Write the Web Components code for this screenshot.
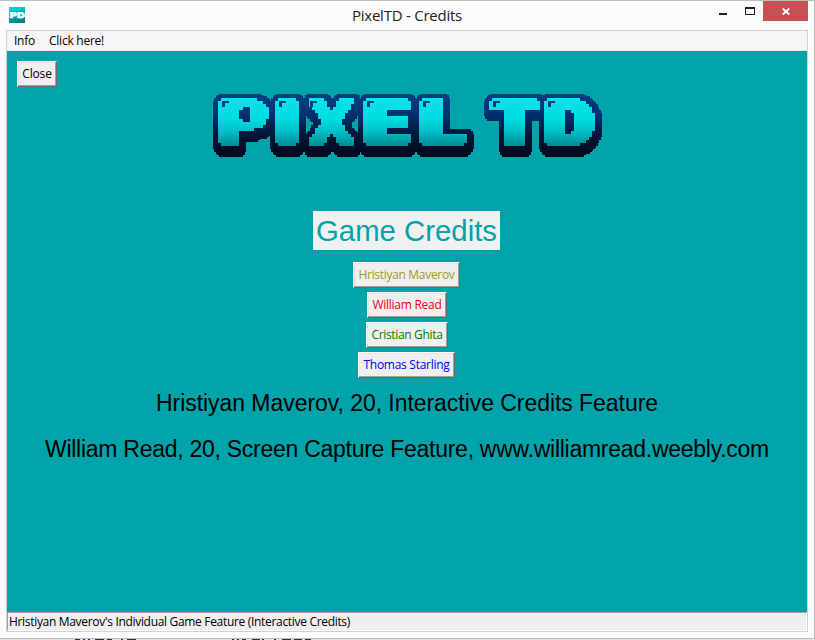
<!DOCTYPE html>
<html lang="en"><head><meta charset="utf-8"><title>PixelTD - Credits</title>
<style>html,body{margin:0;width:815px;height:640px;overflow:hidden}</style></head><body>
<app-window></app-window>
<script>
class FitText extends HTMLElement{
 connectedCallback(){
  const r=this.attachShadow({mode:'open'});
  r.innerHTML='<style>:host{display:inline-block;white-space:nowrap;flex:none}span{display:inline-block;white-space:pre}</style><span></span>';
  const s=r.querySelector('span');s.textContent=this.getAttribute('text');
  const w=+this.getAttribute('width'),n=s.textContent.length;
  const d=s.getBoundingClientRect().width;
  if(d){s.style.letterSpacing=((w-d)/n)+'px';}
  this.style.width=w+'px';
 }}
class TkButton extends HTMLElement{
 connectedCallback(){
  this.attachShadow({mode:'open'}).innerHTML=`<style>:host{display:block;flex:none}
  button{all:unset;box-sizing:border-box;display:flex;align-items:center;justify-content:center;width:100%;height:100%;background:#efefef;border:1px solid;border-color:#fff #696969 #696969 #fff;box-shadow:inset -1px -1px #a0a0a0,inset 1px 1px #e3e3e3;font:12px/16px "Open Sans","Noto Sans",sans-serif}</style><button><slot></slot></button>`;
 }}
class AppIcon extends HTMLElement{
 connectedCallback(){
  this.attachShadow({mode:'open'}).innerHTML=`<style>:host{display:block;width:16px;height:16px}svg{display:block}</style>
  <svg width="16" height="16"><defs><linearGradient id="g" x2=".3" y2="1"><stop stop-color="#00dce2"/><stop offset=".5" stop-color="#00b4bc"/><stop offset="1" stop-color="#00858b"/></linearGradient></defs><rect width="16" height="16" fill="url(#g)"/><text x=".6" y="11" textLength="15.4" lengthAdjust="spacingAndGlyphs" font-family="DejaVu Sans" font-weight="bold" font-size="7.6" fill="#fff" stroke="#fff" stroke-width=".7">PD</text></svg>`;
 }}
class PixelLogo extends HTMLElement{
 connectedCallback(){
  // glyph, left edge, width, horizontal thickening
  const L=[['P',218,51,3],['I',275,24,5],['X',306,51,2],['E',363,48,5],['L',419,48,5],['T',489,51,5],['D',544,51,4]];
  const ox=208,top=7,H=48,ry=1;
  const c=document.createElement('canvas').getContext('2d');c.font='bold 100px "DejaVu Sans"';
  let t='',cut='<rect x="35" y="16" width="7" height="15"/>',glint='',filters='';
  for(const [ch,x0,w,rx] of L){
   const x=x0-ox,m=c.measureText(ch),l=-m.actualBoundingBoxLeft,iw=m.actualBoundingBoxRight-l;
   const sx=(w-2*rx)/iw,sy=(H-2*ry)/72.9;
   filters+=`<filter id="px${ch}" filterUnits="userSpaceOnUse" x="-3" y="-3" width="60" height="57" color-interpolation-filters="sRGB">
   <feMorphology in="SourceGraphic" operator="dilate" radius="${rx} ${ry}" result="fat"/>
   <feFlood x="1" y="1" width="1" height="1" flood-color="#fff" result="dot"/><feOffset in="dot" x="0" y="0" width="3" height="3" result="cell"/><feTile in="cell" result="dots"/>
   <feComposite in="fat" in2="dots" operator="in"/><feMorphology operator="dilate" radius="1"/>
   <feComponentTransfer><feFuncA type="discrete" tableValues="0 1"/></feComponentTransfer></filter>`;
   t+=`<g transform="translate(${x} ${top})"><g filter="url(#px${ch})"><text transform="matrix(${sx} 0 0 ${sy} ${rx-l*sx} ${H-ry})" font-family="DejaVu Sans" font-weight="bold" font-size="100" fill="#fff">${ch}</text></g></g>`;
   for(const [a,b] of [[0,top],[w-3,top],[0,top+H-3],[w-3,top+H-3]])cut+=`<rect x="${x+a}" y="${b}" width="3" height="3"/>`;
   glint+=`<rect x="${x+4}" y="10" width="7" height="2"/><rect x="${x+4}" y="10" width="3" height="6"/>`;
  }
  this.attachShadow({mode:'open'}).innerHTML=`<style>:host{display:block;width:400px;height:76px}svg{display:block}</style>
  <svg width="400" height="76" viewBox="0 0 400 76" role="img" aria-label="Pixel TD"><defs>
  <linearGradient id="face" gradientUnits="userSpaceOnUse" x1="0" y1="7" x2="0" y2="57"><stop stop-color="#08e2e9"/><stop offset=".42" stop-color="#00dce4"/><stop offset=".7" stop-color="#00bac2"/><stop offset="1" stop-color="#008188"/></linearGradient>
  <linearGradient id="edge" gradientUnits="userSpaceOnUse" x1="0" y1="2" x2="0" y2="66"><stop stop-color="#004083"/><stop offset=".3" stop-color="#003376"/><stop offset=".65" stop-color="#001638"/><stop offset="1" stop-color="#00081c"/></linearGradient>
  ${filters}
  <filter id="out" filterUnits="userSpaceOnUse" x="0" y="0" width="400" height="76">
   <feMorphology in="SourceGraphic" operator="dilate" radius="6 3"/><feOffset dx="1" dy="3" result="a"/>
   <feMorphology in="SourceGraphic" operator="dilate" radius="3 8"/><feOffset dx="1" dy="3" result="b"/>
   <feMorphology in="SourceGraphic" operator="dilate" radius="5 6"/><feOffset dx="1" dy="3" result="c"/>
   <feMerge><feMergeNode in="a"/><feMergeNode in="b"/><feMergeNode in="c"/></feMerge></filter>
  <mask id="m" maskUnits="userSpaceOnUse" x="0" y="0" width="400" height="76">${t}<g fill="#000" shape-rendering="crispEdges">${cut}</g></mask>
  <mask id="mo" maskUnits="userSpaceOnUse" x="0" y="0" width="400" height="76"><g filter="url(#out)"><rect width="400" height="76" fill="#fff" mask="url(#m)"/></g></mask>
  </defs>
  <rect width="400" height="76" fill="url(#edge)" mask="url(#mo)"/>
  <rect width="400" height="76" fill="url(#face)" mask="url(#m)"/>
  <g fill="#003e7d" shape-rendering="crispEdges">${glint}</g></svg>`;
 }}
class TitleBar extends HTMLElement{
 connectedCallback(){
  this.attachShadow({mode:'open'}).innerHTML=`<style>:host{display:grid;grid-template-columns:352px 110px 1fr auto;height:29px;padding-right:6px;color:#222;font:15px/29px "Open Sans","Noto Sans",sans-serif}
  app-icon{margin:6px 0 0 9px}svg{display:block}.x{grid-column:4}</style>
  <app-icon></app-icon><fit-text text="PixelTD - Credits" width="110"></fit-text>
  <svg class="x" width="95" height="20" shape-rendering="crispEdges"><rect x="6" y="12" width="8" height="2" fill="#222"/><path d="M32 6h9v7h-9z" transform="translate(.5 .5)" fill="none" stroke="#222"/><rect x="32" y="6" width="10" height="2" fill="#222"/><rect x="50" width="45" height="20" fill="#c75050"/><path d="M69.7 7.5l6.6 6m0-6l-6.6 6" stroke="#fff" stroke-width="1.8" shape-rendering="auto"/></svg>`;
 }}
class MenuBar extends HTMLElement{
 connectedCallback(){
  this.attachShadow({mode:'open'}).innerHTML=`<style>:host{display:flex;gap:14px;height:19px;padding-left:7px;background:#f5f6f7;border-bottom:1px solid #e8e8e8;font:12px/20px "Open Sans","Noto Sans",sans-serif}</style><fit-text text="Info" width="21"></fit-text><fit-text text="Click here!" width="55"></fit-text>`;
 }}
class CreditsPage extends HTMLElement{
 connectedCallback(){
  this.attachShadow({mode:'open'}).innerHTML=`<style>:host{display:flex;flex-direction:column;align-items:center;background:#00a3a9;height:561px;box-sizing:border-box;padding-top:10px}
  .close{width:40px;height:26px;align-self:flex-start;margin-left:10px}pixel-logo{margin-top:4px;margin-left:2px}
  h1{margin:44px 0 12px;width:187px;height:39px;background:#f0f0f0;color:#00a3a9;font:29.3px/40px "Liberation Sans",sans-serif;display:flex;justify-content:center;margin-left:-1px}
  nav{display:flex;flex-direction:column;align-items:center;gap:4px}nav tk-button{height:26px}
  p{margin:0;font:23px/30px "Liberation Sans",sans-serif;color:#000}</style>
  <tk-button class="close"><fit-text text="Close" width="29.5"></fit-text></tk-button>
  <pixel-logo></pixel-logo>
  <h1><fit-text text="Game Credits" width="181"></fit-text></h1>
  <nav><tk-button style="width:107px;color:#a39a16;margin-left:-1px"><fit-text text="Hristiyan Maverov" width="96"></fit-text></tk-button>
  <tk-button style="width:80px;color:#f00014"><fit-text text="William Read" width="69"></fit-text></tk-button>
  <tk-button style="width:82px;color:#008000"><fit-text text="Cristian Ghita" width="71"></fit-text></tk-button>
  <tk-button style="width:97px;color:#00f;margin-left:-1px"><fit-text text="Thomas Starling" width="86"></fit-text></tk-button></nav>
  <p style="margin-top:10px"><fit-text text="Hristiyan Maverov, 20, Interactive Credits Feature" width="502"></fit-text></p>
  <p style="margin-top:16px"><fit-text text="William Read, 20, Screen Capture Feature, www.williamread.weebly.com" width="724"></fit-text></p>`;
 }}
class StatusBar extends HTMLElement{
 connectedCallback(){
  this.attachShadow({mode:'open'}).innerHTML=`<style>:host{display:block;height:19px;box-sizing:border-box;background:#efefef;border:1px solid;border-color:#a0a0a0 #fff #fff #a0a0a0;padding-left:1px;font:12px/18px "Open Sans","Noto Sans",sans-serif}</style><fit-text text="Hristiyan Maverov's Individual Game Feature (Interactive Credits)" width="341"></fit-text>`;
 }}
class AppWindow extends HTMLElement{
 connectedCallback(){
  this.attachShadow({mode:'open'}).innerHTML=`<style>:host{display:block;width:815px;height:640px;background:#e4e4e4}
  .win{box-sizing:border-box;height:639px;background:#fcfcfc;border:solid #bcbcbc;border-width:1px 1px 1px 0}
  .frame{width:800px;margin-left:6px;border:1px solid #d0d1d2}
  .behind{display:block}</style>
  <div class="win"><title-bar></title-bar><div class="frame"><menu-bar></menu-bar><credits-page></credits-page><status-bar></status-bar></div></div>
  <svg class="behind" width="815" height="1" shape-rendering="crispEdges"><path d="M75 .5h5m3 0h2m3 0h2m5 0h9m3 0h5m9 0h2m4 0h9M232 .5h2m3 0h2m3 0h4m6 0h8m2 0h2m10 0h2m6 0h9m3 0h8m3 0h6" stroke="#333"/></svg>`;
 }}
for(const [n,c] of [['fit-text',FitText],['tk-button',TkButton],['app-icon',AppIcon],['pixel-logo',PixelLogo],['title-bar',TitleBar],['menu-bar',MenuBar],['credits-page',CreditsPage],['status-bar',StatusBar],['app-window',AppWindow]])customElements.define(n,c);
</script></body></html>
